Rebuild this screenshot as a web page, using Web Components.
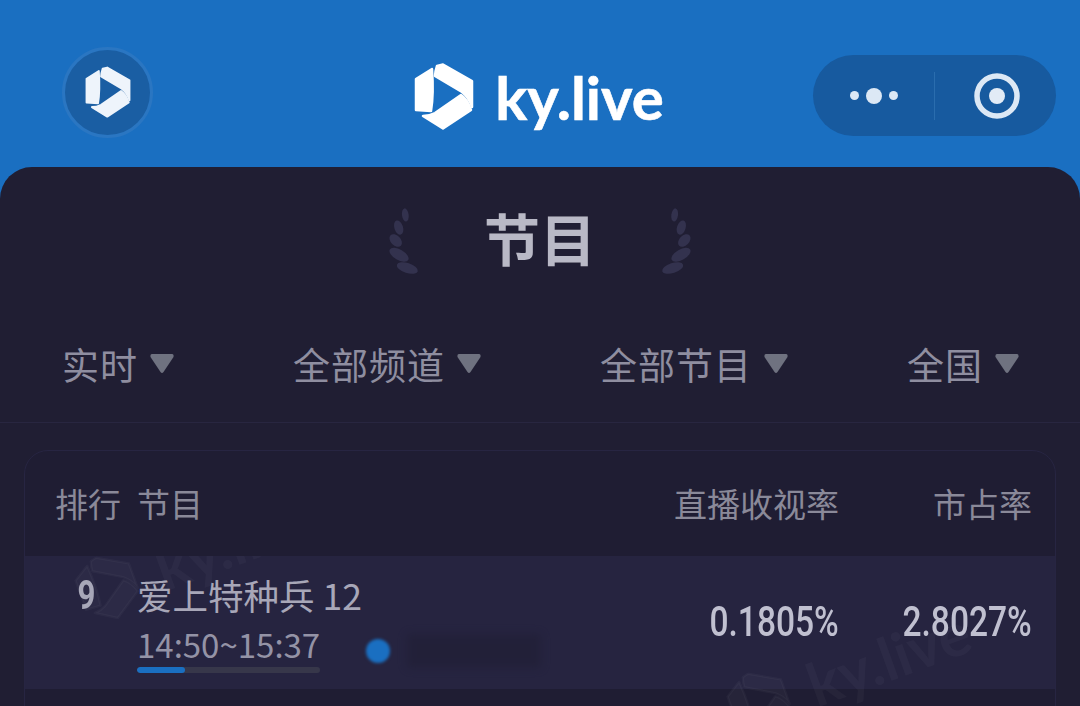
<!DOCTYPE html>
<html lang="zh">
<head>
<meta charset="utf-8">
<title>ky.live</title>
<style>
  html, body { margin: 0; height: 706px; overflow: hidden; }
  body { background: #1a6fc1; font-family: "Noto Sans CJK SC", "Noto Sans", sans-serif; }
</style>
</head>
<body>
<app-header></app-header>
<main-sheet>
  <page-title>节目</page-title>
  <filter-bar>
    <filter-item>实时</filter-item>
    <filter-item>全部频道</filter-item>
    <filter-item>全部节目</filter-item>
    <filter-item>全国</filter-item>
  </filter-bar>
  <rank-card>
    <rank-row rank="9" name="爱上特种兵 12" time="14:50~15:37" progress="26" rating="0.1805%" share="2.8027%"></rank-row>
    <rank-row></rank-row>
  </rank-card>
</main-sheet>

<script>
const LOGO = `
  <svg viewBox="0 0 60 68" fill="currentColor" stroke="currentColor" stroke-width="2.5" stroke-linejoin="round" aria-hidden="true">
    <path d="M18 6 L2 16 V47 L17 48 C19 36 19 20 18 6Z"/>
    <path d="M23 3 L29 1.5 L58 18 V44 C56 37 53 33 48 29 L21 13 C21 9 22 6 23 3Z"/>
    <path d="M47 32 C52 35 55 41 57 47 L29 65.5 L9 53 C13 53 17 52 21 50Z"/>
  </svg>`;

class ComponentBase extends HTMLElement {
  constructor() {
    super();
    this.root = this.attachShadow({ mode: 'open' });
  }
}

class AppHeader extends ComponentBase {
  connectedCallback() {
    this.root.innerHTML = `
      <style>
        :host { display: grid; grid-template-columns: 1fr auto 1fr; align-items: start; height: 167px;
          box-sizing: border-box; padding: 47px 24px 0; background: #1a6fc1; color: #fff; }
        .round { width: 91px; height: 91px; box-sizing: border-box; margin-left: 38px; border-radius: 50%;
          background: #1a5ea3; border: 3px solid #2a76c2; display: flex; align-items: center; justify-content: center; color: #eef4fb; }
        .round svg { width: 46px; height: 53px; }
        .brand { display: flex; align-items: center; gap: 21px; margin-top: 16px; margin-left: -2px; }
        .brand svg { width: 60px; height: 68px; }
        .brand span { font: 700 60px/68px Lato, sans-serif; -webkit-text-stroke: .6px #fff; }
        .capsule { justify-self: end; width: 243px; height: 81px; margin-top: 8px; border-radius: 41px; background: #175a9f;
          display: flex; align-items: center; }
        .capsule > div { flex: 1; display: flex; align-items: center; justify-content: center; }
        .capsule .sep { flex: none; width: 1px; height: 48px; background: #2a6dae; }
        .dots { gap: 7px; }
        .dots i { width: 9px; height: 9px; border-radius: 50%; background: #dce8f5; }
        .dots i:nth-child(2) { width: 16px; height: 16px; }
        .capsule svg { width: 46px; height: 46px; margin-left: 3px; }
      </style>
      <div class="round">${LOGO}</div>
      <div class="brand">${LOGO}<span>ky.live</span></div>
      <div class="capsule">
        <div class="dots"><i></i><i></i><i></i></div>
        <div class="sep"></div>
        <div><svg viewBox="0 0 46 46"><circle cx="23" cy="23" r="20" fill="none" stroke="#dce8f5" stroke-width="5.5"/><circle cx="23" cy="23" r="8" fill="#e2ebf6"/></svg></div>
      </div>`;
  }
}

class MainSheet extends ComponentBase {
  connectedCallback() {
    this.root.innerHTML = `
      <style>
        :host { display: block; height: 539px; border-radius: 32px 32px 0 0; background: #201e33; overflow: hidden; }
      </style>
      <slot></slot>`;
  }
}

class PageTitle extends ComponentBase {
  connectedCallback() {
    const leaves = `
      <svg viewBox="40 30 120 220" fill="#33324e" aria-hidden="true">
        <ellipse cx="107" cy="60" rx="10" ry="20" transform="rotate(-8 107 60)"/>
        <ellipse cx="87" cy="98" rx="13" ry="22" transform="rotate(-18 87 98)"/>
        <ellipse cx="78" cy="137" rx="22" ry="15" transform="rotate(45 78 137)"/>
        <ellipse cx="88" cy="180" rx="32" ry="16" transform="rotate(30 88 180)"/>
        <ellipse cx="113" cy="220" rx="33" ry="15" transform="rotate(18 113 220)"/>
      </svg>`;
    this.root.innerHTML = `
      <style>
        :host { display: flex; justify-content: center; align-items: center; gap: 61px; height: 73px; padding-top: 33px; }
        svg { width: 40px; height: 73px; margin-top: 10px; filter: blur(.6px); }
        svg.right { transform: scaleX(-1); }
        span { font-size: 56px; line-height: 73px; font-weight: 700; color: #b9b9c6; }
      </style>
      ${leaves}<span><slot></slot></span>${leaves.replace('<svg', '<svg class="right"')}`;
  }
}

class FilterBar extends ComponentBase {
  connectedCallback() {
    this.root.innerHTML = `
      <style>
        :host { display: flex; justify-content: space-between; align-items: center; height: 150px; box-sizing: border-box;
          padding: 65px 61px 33px 62px; border-bottom: 1px solid #282640; }
      </style>
      <slot></slot>`;
  }
}

class FilterItem extends ComponentBase {
  connectedCallback() {
    this.root.innerHTML = `
      <style>
        :host { display: flex; align-items: center; gap: 12px; font-size: 37px; line-height: 50px; color: #8f8ea0; letter-spacing: 1px; }
        svg { width: 24px; height: 22px; }
      </style>
      <span><slot></slot></span>
      <svg viewBox="0 0 24 22"><path d="M2 1 H22 Q24 1 23.5 4 L13.5 19 Q12 21 10.5 19 L.5 4 Q0 1 2 1Z" fill="#6f7280"/></svg>`;
  }
}

class RankCard extends ComponentBase {
  connectedCallback() {
    this.root.innerHTML = `
      <style>
        :host { display: block; margin: 27px 24px 0; border: 1px solid #272542; border-radius: 24px 24px 0 0; background: #1f1d33; overflow: hidden; }
        .head { display: grid; grid-template-columns: 82px 1fr auto 193px; align-items: center; height: 105px; box-sizing: border-box;
          padding: 0 23px 2px 30px; font-size: 33px; line-height: 44px; color: #8a8999; }
        .head span:last-child, .head span:nth-child(3) { text-align: right; }
        .list { position: relative; overflow: hidden; }
      </style>
      <div class="head"><span>排行</span><span>节目</span><span>直播收视率</span><span>市占率</span></div>
      <div class="list">
        <slot></slot>
        <water-mark style="left:53px;top:-2px"></water-mark>
        <water-mark style="left:705px;top:114px"></water-mark>
      </div>`;
  }
}

class WaterMark extends ComponentBase {
  connectedCallback() {
    this.root.innerHTML = `
      <style>
        :host { position: absolute; display: flex; align-items: center; gap: 22px; width: 300px; height: 68px; color: rgba(255,255,255,.03);
          transform: rotate(-20deg); transform-origin: 30px 34px; pointer-events: none; }
        svg { width: 60px; height: 68px; flex: none; }
        span { font: 700 60px/68px Lato, sans-serif; }
      </style>
      ${LOGO}<span>ky.live</span>`;
  }
}

class RankRow extends ComponentBase {
  connectedCallback() {
    const rank = this.getAttribute('rank');
    if (!rank) {
      this.root.innerHTML = `<style>:host { display: block; height: 132px; }</style>`;
      return;
    }
    this.root.innerHTML = `
      <style>
        :host { display: grid; grid-template-columns: 82px 1fr auto 193px; align-items: center; height: 133px;
          padding: 0 23px 0 30px; background: #262440; }
        .rank { width: 63px; margin-top: -53px; text-align: center; }
        .num { display: inline-block; font: 500 43px/44px Roboto, sans-serif; color: #c0c0d0; transform: scaleX(.78); transform-origin: right center; text-align: right; white-space: nowrap; }
        .rank .num { font-size: 40px; font-weight: 700; color: #a5a5b6; transform-origin: center; }
        .value { text-align: right; margin-top: -4px; }
        .name { font-size: 35.5px; line-height: 46px; color: #a8a7b8; white-space: nowrap; }
        .meta { display: flex; align-items: center; gap: 46px; margin-top: 4px; }
        .time { width: 183px; font-size: 33px; line-height: 44px; color: #9493a6; white-space: nowrap; }
        .bar { height: 6px; margin-top: 1px; border-radius: 3px; background: #37374a; overflow: hidden; }
        .bar i { display: block; height: 100%; background: #1a6fc1; border-radius: 3px; }
        .dot { width: 24px; height: 24px; border-radius: 50%; background: #1a6fc1; filter: blur(1.5px); flex: none; margin-top: 6px; }
        .smear { width: 134px; height: 34px; margin: 6px 0 0 -29px; flex: none; background: #1f1d32; opacity: .5; filter: blur(4px); border-radius: 3px; }
      </style>
      <div class="rank"><span class="num">${rank}</span></div>
      <div>
        <div class="name">${this.getAttribute('name')}</div>
        <div class="meta">
          <div class="time">${this.getAttribute('time')}<div class="bar"><i style="width:${this.getAttribute('progress')}%"></i></div></div>
          <div class="dot"></div><div class="smear"></div>
        </div>
      </div>
      <div class="value"><span class="num">${this.getAttribute('rating')}</span></div>
      <div class="value"><span class="num">${this.getAttribute('share')}</span></div>`;
  }
}

customElements.define('app-header', AppHeader);
customElements.define('main-sheet', MainSheet);
customElements.define('page-title', PageTitle);
customElements.define('filter-bar', FilterBar);
customElements.define('filter-item', FilterItem);
customElements.define('rank-card', RankCard);
customElements.define('water-mark', WaterMark);
customElements.define('rank-row', RankRow);
</script>
</body>
</html>
